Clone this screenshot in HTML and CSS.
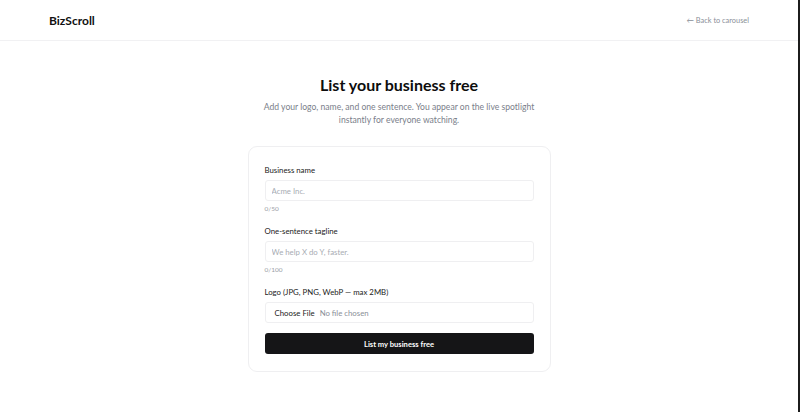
FILE: index.html
```html
<!DOCTYPE html>
<html lang="en">
<head>
<meta charset="utf-8">
<title>BizScroll — List your business</title>
<link rel="stylesheet" href="styles.css">
</head>
<body>
<header class="topbar">
  <a class="brand" href="#">BizScroll</a>
  <a class="back" href="#">← Back to carousel</a>
</header>
<main class="page">
  <h1 class="title">List your business free</h1>
  <p class="lead">Add your logo, name, and one sentence. You appear on the live spotlight<br>instantly for everyone watching.</p>
  <form class="card">
    <div class="field">
      <label class="label" for="bn">Business name</label>
      <input class="input" id="bn" type="text" placeholder="Acme Inc.">
      <span class="count">0/50</span>
    </div>
    <div class="field">
      <label class="label" for="tg">One-sentence tagline</label>
      <input class="input" id="tg" type="text" placeholder="We help X do Y, faster.">
      <span class="count">0/100</span>
    </div>
    <div class="field field-last">
      <label class="label" for="lg">Logo (JPG, PNG, WebP — max 2MB)</label>
      <div class="file">
        <span class="file-btn">Choose File</span>
        <span class="file-name">No file chosen</span>
      </div>
    </div>
    <button class="submit" type="button">List my business free</button>
  </form>
</main>
</body>
</html>
```

FILE: styles.css
```css
html {
  border-right: 2px solid #1c1c1c;
  min-height: 100%;
  box-sizing: border-box;
}
body {
  margin: 0;
  font-family: "Lato", "Noto Sans", sans-serif;
  color: #111;
  background: #fff;
}
.topbar {
  height: 40px;
  display: flex;
  align-items: center;
  justify-content: space-between;
  padding: 0 49px;
  border-bottom: 1px solid #f1f1f3;
}
.brand {
  font-size: 12px;
  font-weight: 700;
  color: #111;
  text-decoration: none;
}
.back {
  font-size: 7.4px;
  color: #8a8f98;
  text-decoration: none;
}
.page {
  display: flex;
  flex-direction: column;
  align-items: center;
  padding-top: 32px;
}
.title {
  margin: 0;
  font-size: 16px;
  font-weight: 700;
  line-height: 24px;
  color: #0d0d0d;
}
.lead {
  margin: 4px 0 0;
  text-align: center;
  font-size: 8.6px;
  line-height: 13px;
  color: #7a808a;
}
.card {
  margin-top: 19px;
  width: 269px;
  padding: 17px 16px 17px;
  border: 1px solid #efeff1;
  border-radius: 9px;
  display: flex;
  flex-direction: column;
}
.field {
  display: flex;
  flex-direction: column;
  margin-bottom: 12px;
}
.field-last {
  margin-bottom: 10px;
}
.label {
  font-size: 7.8px;
  line-height: 12px;
  color: #222;
  margin-bottom: 4px;
}
.input {
  height: 21px;
  box-sizing: border-box;
  border: 1px solid #efeff1;
  border-radius: 3px;
  padding: 0 6px;
  font-family: inherit;
  font-size: 7.8px;
  color: #222;
  outline: none;
}
.input::placeholder {
  color: #a8acb3;
}
.count {
  margin-top: 4px;
  font-size: 6.5px;
  line-height: 8px;
  color: #9a9ea6;
}
.file {
  height: 21px;
  box-sizing: border-box;
  border: 1px solid #efeff1;
  border-radius: 3px;
  display: flex;
  align-items: center;
  gap: 5px;
  padding: 0 9px;
  font-size: 7.8px;
}
.file-btn {
  color: #222;
}
.file-name {
  color: #8a8f98;
}
.submit {
  height: 21px;
  border: none;
  border-radius: 3px;
  background: #151517;
  color: #fff;
  font-family: inherit;
  font-size: 7.6px;
  font-weight: 700;
  cursor: pointer;
}
```
